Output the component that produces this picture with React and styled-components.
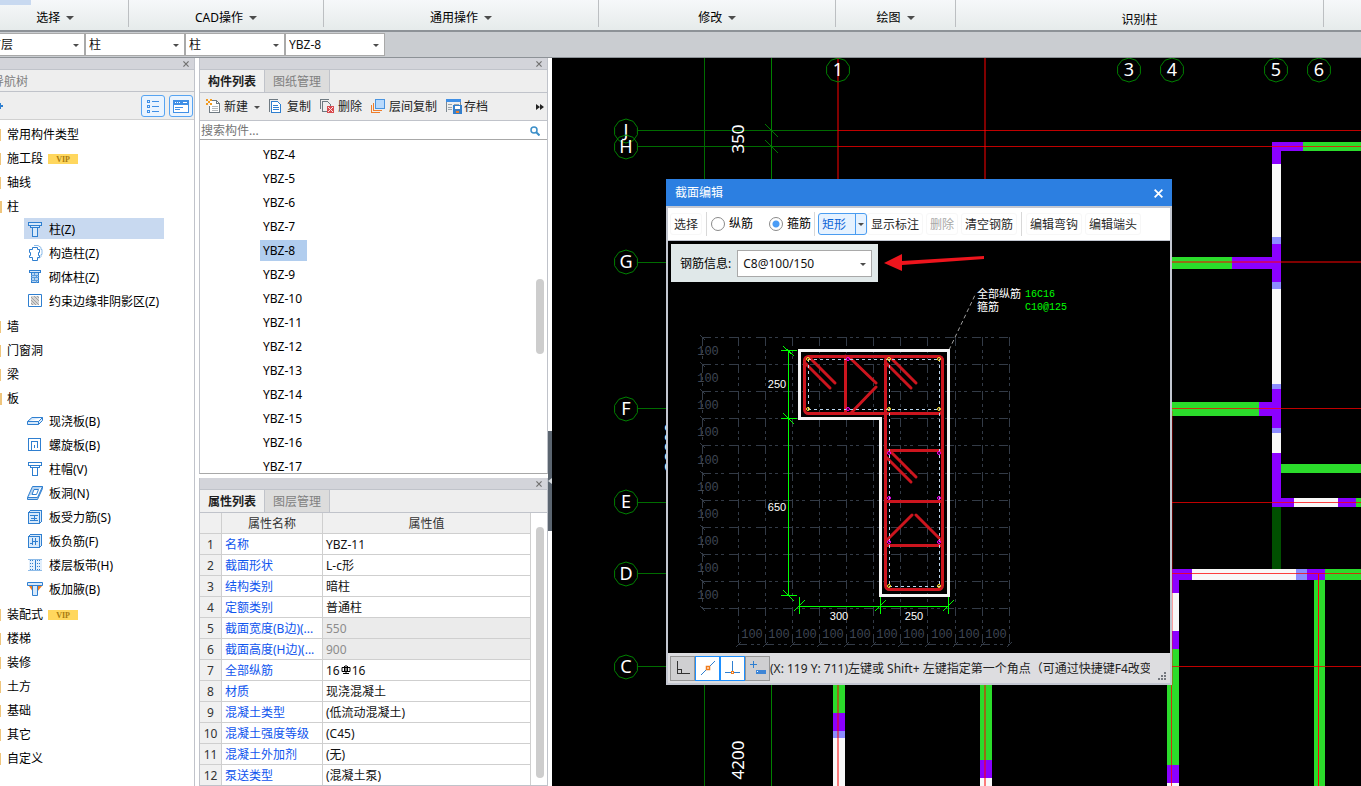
import styled, { createGlobalStyle } from 'styled-components';

const GlobalStyle = createGlobalStyle`
  * {
    box-sizing: border-box;
  }

  body {
    margin: 0;
    background: #fff;
  }

  body, button, input, select, table {
    font-family: "Noto Sans", "Noto Sans CJK SC", sans-serif;
    font-size: 12px;
    line-height: 16px;
    color: #1e1e1e;
  }

  button {
    padding: 0;
    border: 0;
    background: none;
    white-space: nowrap;
  }

  svg {
    display: block;
    flex-shrink: 0;
  }
`;

const Page = styled.div`
  display: flex;
  flex-direction: column;
  height: 100vh;
  overflow: hidden;
`;

/* ---------- ribbon ---------- */

const Ribbon = styled.header`
  position: relative;
  display: flex;
  flex-shrink: 0;
  height: 32px;
  padding-bottom: 3px;
  border-bottom: 2px solid #8d9297;
  background: linear-gradient(#f6f8fa, #e6ebeb);
  overflow: hidden;

  &::before {
    content: "";
    position: absolute;
    left: 0;
    top: 0;
    width: 31px;
    height: 5px;
    background: #c8d9f0;
  }
`;

const RibbonGroup = styled.div`
  display: flex;
  justify-content: center;
  flex: ${(p) => p.$w} 1 0;
  padding-top: ${(p) => (p.$plain ? 12 : 10)}px;
  border-right: 1px solid #bcbfc2;

  &:first-child {
    margin-left: -18px;
  }

  &:last-child {
    border-right: 0;
  }
`;

const RibbonButton = styled.button`
  display: flex;
  align-items: center;
  gap: 6px;
  height: 16px;
  color: #000;
`;

const Caret = styled.span`
  width: 0;
  height: 0;
  border: ${(p) => p.$size || 3}px solid transparent;
  border-top-color: #4c4c4c;
  border-bottom: 0;
`;

const FilterBar = styled.div`
  display: flex;
  flex-shrink: 0;
  height: 26px;
  padding: 1px 0 2px;
  border-bottom: 1px solid #8d9297;
  background: #cacdd1;
`;

const SelectBox = styled.label`
  position: relative;
  display: block;
  width: ${(p) => p.$w}px;
  height: ${(p) => p.$h}px;
  border: 1px solid #a9a9a9;
  background: #fff;

  &:first-child {
    margin-left: ${(p) => p.$shift || 0}px;
  }

  select {
    width: 100%;
    height: 100%;
    padding: 0 18px 0 ${(p) => p.$pad || 3}px;
    border: 0;
    outline: 0;
    appearance: none;
    background: none;
    color: #111;
  }

  &::after {
    content: "";
    position: absolute;
    right: 5px;
    top: 50%;
    margin-top: -1px;
    border: 3px solid transparent;
    border-top-color: #4c4c4c;
    border-bottom: 0;
    pointer-events: none;
  }
`;

/* ---------- panels ---------- */

const Main = styled.main`
  display: flex;
  flex: 1;
  min-height: 0;
`;

const NavPanel = styled.aside`
  display: flex;
  flex-direction: column;
  width: 195px;
  flex-shrink: 0;
  border-right: 1px solid #c0c3ca;
  overflow: hidden;
`;

const MiddleColumn = styled.div`
  display: flex;
  flex-direction: column;
  gap: 4px;
  width: 349px;
  flex-shrink: 0;
  margin-left: 4px;
`;

const Panel = styled.section`
  display: flex;
  flex-direction: column;
  min-height: 0;
  border: 1px solid #c0c3ca;
  border-top: 0;
  ${(p) => (p.$grow ? 'flex: 1;' : 'height: 416px; flex-shrink: 0; border-bottom-color: #a8a8a8;')}
`;

const PanelHeader = styled.div`
  display: flex;
  align-items: center;
  justify-content: flex-end;
  height: 12px;
  flex-shrink: 0;
  padding: 1px 5px 0 0;
  border-bottom: 1px solid #c0c3ca;
  background: #d3d4da;

  button {
    width: 6px;
    height: 6px;
  }
`;

const PanelTitle = styled.div`
  height: 22px;
  flex-shrink: 0;
  padding: 4px 0;
  border-bottom: 1px solid #c0c3ca;
  background: #eee;
  color: #808080;
  white-space: nowrap;

  span {
    margin-left: -8px;
  }
`;

const NavTools = styled.div`
  display: flex;
  align-items: center;
  gap: 4px;
  height: 28px;
  flex-shrink: 0;
  padding-right: 1px;
  border-bottom: 1px solid #d0d0d0;
  background: #eee;
`;

const AddButton = styled.button`
  margin-right: auto;
`;

const ToggleButton = styled.button`
  display: flex;
  align-items: center;
  justify-content: center;
  width: 24px;
  height: 22px;
  border: 1px solid #57a4f2;
  border-radius: 3px;
  background: #eaf4ff;
`;

const Tree = styled.ul`
  display: flex;
  flex-direction: column;
  margin: 2px 0 0;
  padding: 0;
  list-style: none;
`;

const Branch = styled.li`
  display: flex;
  align-items: center;
  gap: 5px;
  height: 24px;
  padding-top: 2px;
  color: #000;
  white-space: nowrap;

  &::before {
    content: "";
    width: ${(p) => (p.$open ? 2 : 1)}px;
    height: 12px;
    margin-right: ${(p) => (p.$open ? 0 : 1)}px;
    background: #efc57c;
  }
`;

const Leaf = styled.li`
  display: flex;
  align-items: center;
  gap: 6px;
  width: 140px;
  height: 21px;
  margin: 0 0 3px 24px;
  padding-left: 3px;
  background: ${(p) => (p.$active ? '#c8d9f0' : 'none')};
  color: #000;
  white-space: nowrap;

  span {
    padding-top: 2px;
  }
`;

const Vip = styled.span`
  width: 30px;
  height: 10px;
  background: #ffd75e;
  color: #a87a10;
  font: bold 8px/11px "Liberation Serif", serif;
  text-align: center;
`;

const TabList = styled.div`
  display: flex;
  height: 23px;
  flex-shrink: 0;
  border-bottom: 1px solid #c0c3ca;
  background: #eee;
`;

const Tab = styled.button`
  width: 65px;
  padding-top: 2px;
  border-right: 1px solid #c0c3ca;
  background: ${(p) => (p.$active ? '#f0f0f0' : '#dcdcdc')};
  color: ${(p) => (p.$active ? '#1e1e1e' : '#808080')};
  font-weight: ${(p) => (p.$active ? 600 : 400)};
`;

const Toolbar = styled.div`
  display: flex;
  align-items: center;
  gap: 9px;
  height: 28px;
  flex-shrink: 0;
  padding: 0 3px 0 6px;
  border-bottom: 1px solid #c0c3ca;
  background: #eee;
`;

const ToolButton = styled.button`
  display: flex;
  align-items: center;
  gap: 2px;
  padding-top: 1px;
  color: #222;

  ${Caret} {
    margin-left: 4px;
  }
`;

const MoreButton = styled.button`
  margin-left: auto;
`;

const SearchRow = styled.div`
  display: flex;
  align-items: center;
  height: 19px;
  flex-shrink: 0;
  padding: 2px 7px 0 1px;
  border-bottom: 1px solid #a8a8a8;

  input {
    flex: 1;
    padding: 0;
    border: 0;
    outline: 0;
  }

  input::placeholder {
    color: #757575;
    opacity: 1;
  }
`;

const ScrollArea = styled.div`
  display: flex;
  flex: 1;
  min-height: 0;
  overflow: hidden;
`;

const ScrollThumb = styled.div`
  width: 8px;
  height: ${(p) => p.$h}px;
  margin: ${(p) => p.$top}px 3px 0 auto;
  border-radius: 4px;
  background: #cdcdcd;
`;

const ComponentList = styled.ul`
  flex: 1;
  margin: 2px 0 0 60px;
  padding: 0;
  list-style: none;
  color: #000;

  li {
    display: flex;
    align-items: center;
    height: 24px;
  }

  span {
    padding: 3px 12px 2px 3px;
  }

  li[aria-current="true"] span {
    background: #b1cdee;
  }
`;

const PropTable = styled.table`
  width: 331px;
  height: 273px;
  border-collapse: separate;
  border-spacing: 0;
  table-layout: fixed;

  th, td {
    height: 21px;
    padding: 2px 3px 0;
    border-right: 1px solid #cfcfcf;
    border-bottom: 1px solid #cfcfcf;
    font-weight: 400;
    text-align: left;
    white-space: nowrap;
    overflow: hidden;
    color: #111;
  }

  thead th, tbody th {
    padding: 2px 0 0;
    background: #f0f0f0;
    color: #333;
    text-align: center;
  }

  td:nth-child(2) {
    padding-right: 0;
    color: #0f55ee;
  }

  tr[data-readonly="true"] td:last-child {
    background: #ebebeb;
    color: #8c8c8c;
  }

  svg {
    display: inline-block;
    margin: 0 1px;
  }
`;

const Splitter = styled.div`
  display: flex;
  align-items: center;
  width: 4px;
  height: 100px;
  flex-shrink: 0;
  margin-top: 373px;
  background: #5b6570;
`;

/* ---------- drawing area ---------- */

const Workspace = styled.section`
  position: relative;
  flex: 1;
  min-width: 0;
  overflow: hidden;
  background: #000;

  > svg {
    width: 100%;
    height: 100%;
  }
`;

const Dialog = styled.section`
  position: absolute;
  left: 114px;
  top: 121px;
  width: 506px;
  border: 2px solid #c3c7d1;
  border-top: 0;
  background: #c3c7d1;
`;

const DialogTitle = styled.div`
  display: flex;
  align-items: center;
  justify-content: space-between;
  height: 27px;
  margin: 0 -2px 2px;
  padding: 1px 9px 0;
  background: #2c7fe1;
  color: #fff;
`;

const DialogTools = styled.div`
  display: flex;
  align-items: center;
  height: 32px;
  padding: 0 2px;
  margin-bottom: 1px;
  background: #fff;
`;

const FlatButton = styled.button`
  height: 22px;
  margin-right: 3px;
  padding: 1px 3px 0;
  border: 1px solid #f7f7f7;
  border-radius: 3px;
  color: #2a2a2a;

  &:disabled {
    color: #a8a8a8;
  }
`;

const Divider = styled.span`
  width: 1px;
  height: 24px;
  margin: 0 ${(p) => p.$after}px 0 1px;
  background: #d8d8d8;
`;

const RadioLabel = styled.label`
  display: flex;
  align-items: center;
  gap: 4px;
  margin-right: ${(p) => p.$after}px;
  color: #000;
  white-space: nowrap;

  input {
    width: 14px;
    height: 14px;
    margin: 0;
    border: 1px solid #8a8a8a;
    border-radius: 50%;
    appearance: none;
    background: #fff;
  }

  input:checked {
    background: radial-gradient(circle, #4a9cf5 3px, #fff 4px);
  }
`;

const SplitButton = styled.div`
  display: flex;
  height: 22px;
  border: 1px solid #4a9cf0;
  border-radius: 3px;
  background: #e6f2ff;

  button:first-child {
    width: 36px;
    padding: 1px 8px 0 2px;
    color: #0b63d6;
  }

  button:last-child {
    display: flex;
    align-items: center;
    justify-content: center;
    width: 11px;
    border-left: 1px solid #4a9cf0;
  }
`;

const SectionView = styled.div`
  position: relative;
  height: 412px;
  background: #000;

  > svg {
    width: 100%;
    height: 100%;
  }
`;

const RebarInfo = styled.div`
  position: absolute;
  left: 3px;
  top: 3px;
  display: flex;
  align-items: center;
  gap: 6px;
  height: 38px;
  padding: 1px 6px 0 9px;
  background: #e0e8e9;
  color: #000;
  white-space: nowrap;
`;

const StatusBar = styled.div`
  display: flex;
  align-items: center;
  height: 30px;
  padding: 0 4px 0 2px;
  background: #dddde0;

  p {
    flex: 1;
    min-width: 0;
    margin: 0 8px 0 0;
    padding-top: 2px;
    overflow: hidden;
    white-space: nowrap;
    color: #222;
  }

  > svg {
    align-self: flex-end;
    margin-bottom: 3px;
  }
`;

const SnapButton = styled.button`
  display: flex;
  align-items: center;
  justify-content: center;
  width: 25px;
  height: 25px;
  border: 1px solid ${(p) => (p.$on ? '#1e90ff' : '#969696')};
  background: ${(p) => (p.$on ? '#fff' : '#cfcfd1')};
`;

/* ---------- icons ---------- */

const Icon = ({ children, size = 16, ...rest }) => (
  <svg width={size} height={size} viewBox={`0 0 ${size} ${size}`} fill="none" stroke="#2f7fd0" shapeRendering="crispEdges" aria-hidden="true" {...rest}>
    {children}
  </svg>
);

const CloseX = ({ color = '#707070', size = 6 }) => (
  <svg width={size} height={size} viewBox="0 0 7 7" fill="none" stroke={color} strokeWidth="1.4" aria-hidden="true">
    <path d="M.5 .5 6.5 6.5M6.5 .5 .5 6.5" />
  </svg>
);

const treeIcons = {
  column: (
    <Icon><path d="M1.5 1.5h13v3h-13zM3.5 4.5h9v2h-9zM5.5 6.5h5v9h-5z" fill="#d7e9fb" /></Icon>
  ),
  structural: (
    <Icon shapeRendering="auto">
      <path d="M7 .5h4l3 2v2h1v5h-1v2l-2 2" stroke="#8dbbe8" />
      <path d="M5.5 2.500h5v2h2v3h-1v3h1v2h-2v3h-5v-3h-3v-2h1v-3h-1v-3h3z" fill="#fff" />
    </Icon>
  ),
  masonry: (
    <Icon>
      <path d="M2.5 1.5h11v2h-11z" fill="#d7e9fb" />
      <path d="M4.5 3.5h7v10h-7z" fill="#b8d5f2" />
      <path d="M4 6.500h8M4 8.500h8M4 11.500h8M7.500 4v3M9.500 7v2M7.500 9v2M9.500 12v2" stroke="#5a9bdb" />
    </Icon>
  ),
  hatch: (
    <Icon shapeRendering="auto">
      <path d="M1.5 1.5h13v12h-13z" fill="#fff" />
      <path d="M4 3h8v9H4z" fill="#d4d4d4" stroke="none" />
      <path d="M4 4l8 8M4 7l5 5M4 10l2 2M7 3l5 5M10 3l2 2" stroke="#a2a2a2" />
    </Icon>
  ),
  slab: (
    <Icon shapeRendering="auto"><path d="M.5 8.500 5 4.500h10.500v3l-4 4H.500zM.500 8.500h11l4-4M11.500 8.500v3" fill="#d7e9fb" /></Icon>
  ),
  spiral: (
    <Icon><path d="M14 13.500H1.500v-12h12v12M10 10.500h.5v-6h-6v9M7.500 11V7.500" /></Icon>
  ),
  cap: (
    <Icon><path d="M1.500 1.500h13v3h-13zM3.500 4.500h9v2h-9zM5.500 6.500h5v8h-5z" fill="#fff" /></Icon>
  ),
  opening: (
    <Icon shapeRendering="auto">
      <path d="M5.500 1.500h10l-5 11H.500zM.500 12.500v2h10l5-11v-2" fill="#b8d5f2" />
      <path d="M7 4.500h4.500l-2 5H5z" fill="#fff" />
    </Icon>
  ),
  mainBar: (
    <Icon>
      <path d="M1.500 3.500h11v11h-11zM1.500 3.500l2-2h11v11l-2 2" fill="#d7e9fb" />
      <path d="M3 6.500h8M3 11.500h8M7.500 6v6M4 9.500h6" />
    </Icon>
  ),
  negativeBar: (
    <Icon>
      <path d="M1.500 3.500h11v11h-11zM1.500 3.500l2-2h11v11l-2 2" fill="#d7e9fb" />
      <path d="M5.500 5v7M8.500 5v7M3 10.500h3M5 8.500h6" />
    </Icon>
  ),
  strip: (
    <Icon>
      <path d="M2 2.500h13v11H2z" fill="#e2effc" stroke="none" />
      <path d="M1 2.500h14M1 13.500h14" stroke="#8dbbe8" />
      <path d="M3.500 3v10M5.500 3v10M10.500 3v10M12.500 3v10" strokeDasharray="1 2" />
      <path d="M8.500 3v10" />
    </Icon>
  ),
  haunch: (
    <Icon shapeRendering="auto">
      <path d="M2 5h13l-5 6H6z" fill="#f07c1c" stroke="none" />
      <path d="M.500 1.500h15v3H.500zM5.500 4.500h5v10h-5z" fill="#d7e9fb" />
    </Icon>
  ),
};

const toolIcons = {
  new: (
    <Icon stroke="#6f7a82">
      <path d="M4.500 1.500h6l3 3v9h-10v-7" fill="#fff" />
      <path d="M10.500 1.500v3h3" />
      <path d="M6 7.500h6M6 9.500h6M6 11.500h6" stroke="#b5b9bc" />
      <path d="M0 0h2v2H0zM4 0h2v2H4zM2 2h2v2H2zM0 4h2v2H0zM4 4h2v2H4z" fill="#f29a1f" stroke="none" />
    </Icon>
  ),
  copy: (
    <Icon>
      <path d="M.500 13V.500h8" stroke="#6f7a82" />
      <path d="M2.500 2.500h6l3 3v8h-9z" fill="#fff" />
      <path d="M4 6.500h5M4 8.500h6M4 10.500h6" />
    </Icon>
  ),
  remove: (
    <Icon stroke="#6f7a82">
      <path d="M.500 10V.500h8M2.500 12.500v-10h5l3 3V7M2.500 12.500h4" />
      <path d="M7 7h7v7H7z" fill="#d84b50" stroke="none" />
      <path d="M8 8l5 5M13 8l-5 5" stroke="#ffe3e3" shapeRendering="auto" />
    </Icon>
  ),
  layer: (
    <Icon>
      <path d="M.500 6v7.500h8M2.500 4v7.500h8" stroke="#ee7d2b" />
      <path d="M4.500 .500h9v9h-9z" fill="#b9dafd" stroke="#4a94e0" />
    </Icon>
  ),
  save: (
    <Icon>
      <path d="M.500 13V1h14v6" stroke="#7d8890" />
      <path d="M0 0h15v3H0z" fill="#3f8fe6" stroke="none" />
      <path d="M2 5.500h4M8 5.500h5M2 8.500h4M2 10.500h4" stroke="#9aa4aa" />
      <path d="M7.500 6.500h8v8h-8z" fill="#3c7fc4" />
      <path d="M9 7h5v3H9z" fill="#fff" stroke="none" />
      <path d="M10 12h3v2h-3z" fill="#f0802a" stroke="none" />
    </Icon>
  ),
};

/* ---------- data ---------- */

const ribbonGroups = [
  { name: '选择', w: 147 },
  { name: 'CAD操作', w: 194 },
  { name: '通用操作', w: 276 },
  { name: '修改', w: 237 },
  { name: '绘图', w: 119 },
  { name: '识别柱', w: 369, plain: true },
  { name: '', w: 37, plain: true },
];

const tree = [
  { name: '常用构件类型' },
  { name: '施工段', vip: true },
  { name: '轴线' },
  {
    name: '柱',
    children: [
      ['柱(Z)', 'column'],
      ['构造柱(Z)', 'structural'],
      ['砌体柱(Z)', 'masonry'],
      ['约束边缘非阴影区(Z)', 'hatch'],
    ],
  },
  { name: '墙' },
  { name: '门窗洞' },
  { name: '梁' },
  {
    name: '板',
    children: [
      ['现浇板(B)', 'slab'],
      ['螺旋板(B)', 'spiral'],
      ['柱帽(V)', 'cap'],
      ['板洞(N)', 'opening'],
      ['板受力筋(S)', 'mainBar'],
      ['板负筋(F)', 'negativeBar'],
      ['楼层板带(H)', 'strip'],
      ['板加腋(B)', 'haunch'],
    ],
  },
  { name: '装配式', vip: true },
  { name: '楼梯' },
  { name: '装修' },
  { name: '土方' },
  { name: '基础' },
  { name: '其它' },
  { name: '自定义' },
];

const columns = [4, 5, 6, 7, 8, 9, 10, 11, 12, 13, 14, 15, 16, 17].map((n) => `YBZ-${n}`);

const RebarMark = () => (
  <svg width="10" height="10" viewBox="0 0 10 10" fill="none" stroke="#000" aria-label="C">
    <path d="M1 2.500h8v4H1zM5 0v9M3.500 1v6M6.500 1v6M2 8.500h6" />
  </svg>
);

const properties = [
  ['名称', 'YBZ-11'],
  ['截面形状', 'L-c形'],
  ['结构类别', '暗柱'],
  ['定额类别', '普通柱'],
  ['截面宽度(B边)(...', '550', true],
  ['截面高度(H边)(...', '900', true],
  ['全部纵筋', <>16<RebarMark />16</>],
  ['材质', '现浇混凝土'],
  ['混凝土类型', '(低流动混凝土)'],
  ['混凝土强度等级', '(C45)'],
  ['混凝土外加剂', '(无)'],
  ['泵送类型', '(混凝土泵)'],
];

/* ---------- plan drawing ---------- */

const GREEN = '#2bdc2b';
const PURPLE = '#8b00ff';
const LILAC = '#8c8cff';
const WHITE = '#f8f8f8';

// [x, y, width, height, colour]
const walls = [
  [1303, 142, 400, 9, GREEN],
  [1272, 142, 31, 9, PURPLE],
  [1272, 151, 9, 13, PURPLE],
  [1272, 164, 9, 73, WHITE],
  [1272, 237, 9, 7, LILAC],
  [1272, 244, 9, 38, PURPLE],
  [1272, 282, 9, 7, LILAC],
  [1272, 289, 9, 95, WHITE],
  [1272, 384, 9, 5, LILAC],
  [1272, 389, 9, 39, PURPLE],
  [1272, 428, 9, 5, LILAC],
  [1272, 433, 9, 20, WHITE],
  [1272, 453, 9, 54, PURPLE],
  [1272, 507, 9, 62, '#005000'],
  [1160, 257, 72, 12, GREEN],
  [1232, 257, 40, 12, PURPLE],
  [1160, 402, 99, 14, GREEN],
  [1259, 402, 13, 14, PURPLE],
  [1281, 464, 400, 9, GREEN],
  [1281, 498, 13, 9, PURPLE],
  [1294, 498, 44, 9, WHITE],
  [1338, 498, 18, 9, PURPLE],
  [1356, 498, 300, 9, GREEN],
  [1167, 569, 25, 11, PURPLE],
  [1192, 569, 104, 11, WHITE],
  [1296, 569, 11, 11, LILAC],
  [1307, 569, 18, 11, PURPLE],
  [1325, 569, 300, 11, GREEN],
  [1314, 580, 11, 400, GREEN],
  [1167, 580, 12, 13, PURPLE],
  [1167, 593, 12, 38, WHITE],
  [1167, 631, 12, 18, PURPLE],
  [1167, 649, 12, 116, GREEN],
  [1167, 765, 12, 18, PURPLE],
  [1167, 783, 12, 200, WHITE],
  [980, 649, 12, 111, GREEN],
  [980, 760, 12, 18, PURPLE],
  [980, 778, 12, 200, WHITE],
  [833, 649, 12, 64, GREEN],
  [833, 713, 12, 18, PURPLE],
  [833, 731, 12, 7, LILAC],
  [833, 738, 12, 200, WHITE],
];

const rowAxes = [['J', 131], ['H', 147], ['G', 262], ['F', 409], ['E', 502], ['D', 574], ['C', 667]];
const colAxes = [['1', 838], ['3', 1129], ['4', 1172], ['5', 1276], ['6', 1319]];

const bubblePoints = (cx, cy) =>
  Array.from({ length: 10 }, (_, i) => {
    const a = (i * Math.PI) / 5 + Math.PI / 2;
    return `${(cx + 12 * Math.cos(a)).toFixed(1)},${(cy + 12 * Math.sin(a)).toFixed(1)}`;
  }).join(' ');

const Bubble = ({ x, y, name }) => (
  <g>
    <polygon points={bubblePoints(x, y)} fill="none" stroke="#008000" />
    <text x={x} y={y + 6} fill="#fff" fontSize="18" textAnchor="middle">{name}</text>
  </g>
);

const PlanDrawing = () => (
  <svg viewBox="552 58 809 728" preserveAspectRatio="xMinYMin slice" role="img" aria-label="平面图">
    <g shapeRendering="crispEdges">
      <path d="M704.500 58V1200M638 130.500H838M638 146.500H838M638 262.500H700M638 408.500H700M638 502.500H700M638 573.500H700M638 666.500H700" stroke="#006c00" />
      <path d="M771.500 58V1200" stroke="#008000" />
      {walls.map(([x, y, w, h, fill]) => (
        <rect key={`${x}-${y}`} x={x} y={y} width={w} height={h} fill={fill} />
      ))}
      <path d="M838 58V1200M985 58V1200M1160 262H1700" stroke="#ff0000" strokeOpacity=".5" strokeWidth="2" />
      <path d="M838 130.500H1700M838 146.500H1700M1160 408.500H1700M1160 502.500H1700M1160 573.500H1700M1160 666.500H1700M1171.500 685V1200" stroke="#ff0000" strokeOpacity=".75" />
      <path d="M1172.500 411V685" stroke="#ff0000" strokeOpacity=".35" />
      <path d="M1318.500 574V1200" stroke="#ff0000" />
    </g>
    <path d="M765 124 778 137M765 140 778 153" stroke="#007800" />
    {rowAxes.map(([name, y]) => <Bubble key={name} x={626} y={y} name={name} />)}
    {colAxes.map(([name, x]) => <Bubble key={name} x={x} y={70} name={name} />)}
    <g fill="#fff" fontSize="17" textAnchor="middle">
      <text transform="translate(744 139) rotate(-90)">350</text>
      <text transform="translate(744 760) rotate(-90)">4200</text>
      <text transform="translate(677 447) rotate(-90)">38800</text>
    </g>
  </svg>
);

/* ---------- section drawing ---------- */

const gridX = [738, 765, 792, 819, 846, 873, 900, 927, 955, 982, 1009];
const gridY = [337, 364, 391, 418, 445, 473, 500, 527, 554, 581, 608];

const cornerBars = [[808, 359], [889, 359], [939, 359], [808, 409], [889, 409], [939, 409], [889, 586], [939, 586]];
const sideBars = [[848, 359], [848, 409], [889, 453], [939, 453], [889, 498], [939, 498], [889, 542], [939, 542]];

const SectionDrawing = () => (
  <svg viewBox="668 241 502 412" preserveAspectRatio="xMinYMin slice" role="img" aria-label="截面配筋图">
    <g stroke="#333b47" fill="none" shapeRendering="crispEdges">
      {gridX.map((x) => <path key={x} d={`M${x}.500 337V646`} strokeDasharray="9 4 3 3 3 5" />)}
      {gridY.map((y) => <path key={y} d={`M702 ${y}.500H1009`} strokeDasharray="9 4 3 3 3 5" />)}
      <path d="M702.500 337V608M738 644.500H1009" strokeDasharray="9 4 3 3 3 5" />
    </g>
    <g stroke="#333b47">
      {gridX.map((x) => <path key={x} d={`M${x - 2} 647l5-5`} />)}
      {gridY.map((y) => <path key={y} d={`M700 ${y - 2}l5 5`} />)}
    </g>
    <g fill="#3f4754" fontFamily="Liberation Mono, monospace" fontSize="12" textAnchor="middle">
      {gridX.slice(1).map((x) => <text key={x} x={x - 13} y="638">100</text>)}
      {gridY.slice(1).map((y) => <text key={y} x="708" y={y - 9}>100</text>)}
    </g>

    <path d="M949 350 976 293" stroke="#a0a0a0" strokeDasharray="4 3" />
    <g fontSize="11">
      <text x="977" y="298" fill="#fff">全部纵筋</text>
      <text x="977" y="311" fill="#fff">箍筋</text>
      <g fill="#00ff00" fontFamily="Liberation Mono, monospace" fontSize="10">
        <text x="1025" y="297">16C16</text>
        <text x="1025" y="310">C10@125</text>
      </g>
    </g>

    <path d="M799.500 350.500H948.500V595.500H880.500V418.500H799.500Z" fill="none" stroke="#f4f4f4" strokeWidth="3" shapeRendering="crispEdges" />
    <g fill="none" stroke="#cc151e" strokeWidth="3" strokeLinecap="round">
      <rect x="804.500" y="356.500" width="138" height="57" rx="4" />
      <rect x="885.500" y="356.500" width="57" height="233" rx="4" />
      <path d="M845.500 356V413M886 450.500H942M886 501.500H942M886 545.500H942" />
      <path d="M809 357 835 383M805 363 830 388M890 357 916 383M886 363 911 388M890 451 916 477M886 457 911 482" />
      <path d="M849 357 876 383M851 413 876 387M887 540 912 515M916 515 941 540" />
    </g>
    <path d="M808 359.500H940M808 409.500H940M808.500 359V410M939.500 359V587M889.500 359V587M889 586.500H940" fill="none" stroke="#bcd6ee" strokeDasharray="3 3" shapeRendering="crispEdges" />
    {cornerBars.map(([x, y]) => <circle key={`${x}-${y}`} cx={x} cy={y} r="1.500" fill="none" stroke="#ffe030" />)}
    {sideBars.map(([x, y]) => <circle key={`${x}-${y}`} cx={x} cy={y} r="1.500" fill="none" stroke="#ff00ff" />)}

    <g stroke="#00ff00" shapeRendering="crispEdges">
      <path d="M788.500 350V596M781 350.500H797M781 418.500H797M781 595.500H797M799 606.500H949M799.500 597V614M880.500 597V614M948.500 597V614" />
      <path d="M783 346 794 356M783 413 794 424M783 590 794 601M794 611 805 600M875 611 886 600M943 611 954 600" />
    </g>
    <g fill="#fff" fontFamily="Liberation Sans, sans-serif" fontSize="11" textAnchor="middle">
      <text x="777" y="388">250</text>
      <text x="777" y="511">650</text>
      <text x="839" y="620">300</text>
      <text x="914" y="620">250</text>
    </g>

    <path d="M884 263 902 254V261L984 256V259L902 265V271Z" fill="#ee151d" />
  </svg>
);

const SectionDialog = () => (
  <Dialog role="dialog" aria-label="截面编辑">
    <DialogTitle>
      截面编辑
      <button aria-label="关闭"><CloseX color="#fff" size={9} /></button>
    </DialogTitle>
    <DialogTools>
      <FlatButton>选择</FlatButton>
      <Divider $after={4} />
      <RadioLabel $after={16}><input type="radio" name="bar" />纵筋</RadioLabel>
      <RadioLabel $after={2}><input type="radio" name="bar" defaultChecked />箍筋</RadioLabel>
      <Divider $after={3} />
      <SplitButton>
        <button>矩形</button>
        <button aria-label="更多形状"><Caret /></button>
      </SplitButton>
      <FlatButton>显示标注</FlatButton>
      <FlatButton disabled>删除</FlatButton>
      <FlatButton>清空钢筋</FlatButton>
      <Divider $after={4} />
      <FlatButton>编辑弯钩</FlatButton>
      <FlatButton>编辑端头</FlatButton>
    </DialogTools>
    <SectionView>
      <SectionDrawing />
      <RebarInfo>
        <label htmlFor="rebar">钢筋信息:</label>
        <SelectBox as="span" $w={135} $h={27} $pad={5}>
          <select id="rebar"><option>C8@100/150</option></select>
        </SelectBox>
      </RebarInfo>
    </SectionView>
    <StatusBar>
      <SnapButton aria-label="正交">
        <Icon stroke="#333"><path d="M2.500 1v12.500H15M2.500 9.500h4v4" /></Icon>
      </SnapButton>
      <SnapButton $on aria-label="中点">
        <Icon shapeRendering="auto"><path d="M1 15 15 1" /><path d="M6.500 6.500h3v3h-3z" fill="#fff" stroke="#f07c1c" strokeWidth="1.500" /></Icon>
      </SnapButton>
      <SnapButton $on aria-label="垂点">
        <Icon><path d="M7.500 1v10M0 12.500h15" /><path d="M6.500 11.500h2v2h-2z" fill="#fff" stroke="#f07c1c" /></Icon>
      </SnapButton>
      <SnapButton aria-label="动态输入">
        <Icon><path d="M0 4.500h7M3.500 1v7" /><path d="M6 10h10v4H6z" fill="#3f86d6" stroke="none" /><path d="M7 11.500h1" stroke="#fff" /></Icon>
      </SnapButton>
      <p>(X: 119 Y: 711)左键或 Shift+ 左键指定第一个角点（可通过快捷键F4改变插入点）</p>
      <svg width="8" height="8" viewBox="0 0 8 8" fill="#74777e" aria-hidden="true">
        <path d="M6 0h2v2H6zM3 3h2v2H3zM6 3h2v2H6zM0 6h2v2H0zM3 6h2v2H3zM6 6h2v2H6z" />
      </svg>
    </StatusBar>
  </Dialog>
);

const PropertyPanel = () => (
  <Panel $grow>
    <PanelHeader><button aria-label="关闭"><CloseX /></button></PanelHeader>
    <TabList>
      <Tab $active>属性列表</Tab>
      <Tab>图层管理</Tab>
    </TabList>
    <ScrollArea>
      <PropTable>
        <colgroup>
          <col style={{ width: 22 }} />
          <col style={{ width: 101 }} />
          <col />
        </colgroup>
        <thead>
          <tr><th /><th>属性名称</th><th>属性值</th></tr>
        </thead>
        <tbody>
          {properties.map(([name, value, readonly], i) => (
            <tr key={name} data-readonly={!!readonly}>
              <th>{i + 1}</th>
              <td>{name}</td>
              <td>{value}</td>
            </tr>
          ))}
        </tbody>
      </PropTable>
      <ScrollThumb $top={14} $h={251} />
    </ScrollArea>
  </Panel>
);

export default function App() {
  return (
    <Page>
      <GlobalStyle />
      <Ribbon>
        {ribbonGroups.map((g) => (
          <RibbonGroup key={g.name} $w={g.w} $plain={g.plain}>
            {g.name && <RibbonButton>{g.name}{!g.plain && <Caret $size={4} />}</RibbonButton>}
          </RibbonGroup>
        ))}
      </Ribbon>
      <FilterBar>
        {['首层', '柱', '柱', 'YBZ-8'].map((v, i) => (
          <SelectBox key={i} $w={100} $h={23} $shift={-15}>
            <select aria-label={v}><option>{v}</option></select>
          </SelectBox>
        ))}
      </FilterBar>
      <Main>
        <NavPanel>
          <PanelHeader><button aria-label="关闭"><CloseX /></button></PanelHeader>
          <PanelTitle><span>导航树</span></PanelTitle>
          <NavTools>
            <AddButton aria-label="添加">
              <svg width="4" height="8" viewBox="0 0 4 8" fill="#2f7fd0"><path d="M0 1h1v2h2v2H1v2H0z" /></svg>
            </AddButton>
            <ToggleButton aria-label="列表视图">
              <Icon stroke="#3f8fe6"><path d="M2.500 2.500h2v2h-2zM2.500 7.500h2v2h-2zM2.500 12.500h2v2h-2zM7 3.500h7M7 8.500h7M7 13.500h7" /></Icon>
            </ToggleButton>
            <ToggleButton aria-label="卡片视图">
              <Icon stroke="#3f8fe6">
                <path d="M.500 2.500h15v12H.500z" fill="#fff" />
                <path d="M0 2h16v5H0z" fill="#3f8fe6" stroke="none" />
                <path d="M2 4.500h1M4 4.500h1M6 4.500h1M10 4.500h4" stroke="#fff" />
                <path d="M2 9.500h8M2 11.500h5" />
              </Icon>
            </ToggleButton>
          </NavTools>
          <Tree>
            {tree.map((b) => [
              <Branch key={b.name} $open={!!b.children}>
                {b.name}
                {b.vip && <Vip>VIP</Vip>}
              </Branch>,
              ...(b.children || []).map(([name, icon]) => (
                <Leaf key={name} $active={icon === 'column'}>{treeIcons[icon]}<span>{name}</span></Leaf>
              )),
            ])}
          </Tree>
        </NavPanel>
        <MiddleColumn>
          <Panel>
            <PanelHeader><button aria-label="关闭"><CloseX /></button></PanelHeader>
            <TabList>
              <Tab $active>构件列表</Tab>
              <Tab>图纸管理</Tab>
            </TabList>
            <Toolbar>
              <ToolButton>{toolIcons.new}新建<Caret /></ToolButton>
              <ToolButton>{toolIcons.copy}复制</ToolButton>
              <ToolButton>{toolIcons.remove}删除</ToolButton>
              <ToolButton>{toolIcons.layer}层间复制</ToolButton>
              <ToolButton>{toolIcons.save}存档</ToolButton>
              <MoreButton aria-label="更多">
                <svg width="8" height="6" viewBox="0 0 8 6" fill="#222"><path d="M0 0l4 3-4 3zM4 0l4 3-4 3z" /></svg>
              </MoreButton>
            </Toolbar>
            <SearchRow>
              <input placeholder="搜索构件..." aria-label="搜索构件" />
              <svg width="10" height="10" viewBox="0 0 10 10" fill="none" stroke="#3c8fc8" strokeWidth="1.500" aria-hidden="true">
                <circle cx="4" cy="4" r="3" />
                <path d="M6 6l3.500 3.500" strokeWidth="2" />
              </svg>
            </SearchRow>
            <ScrollArea>
              <ComponentList>
                {columns.map((c) => (
                  <li key={c} aria-current={c === 'YBZ-8'}><span>{c}</span></li>
                ))}
              </ComponentList>
              <ScrollThumb $top={139} $h={75} />
            </ScrollArea>
          </Panel>
          <PropertyPanel />
        </MiddleColumn>
        <Splitter>
          <svg width="4" height="6" viewBox="0 0 4 6" fill="#d8dce0"><path d="M4 0v6L0 3z" /></svg>
        </Splitter>
        <Workspace>
          <PlanDrawing />
          <SectionDialog />
        </Workspace>
      </Main>
    </Page>
  );
}
